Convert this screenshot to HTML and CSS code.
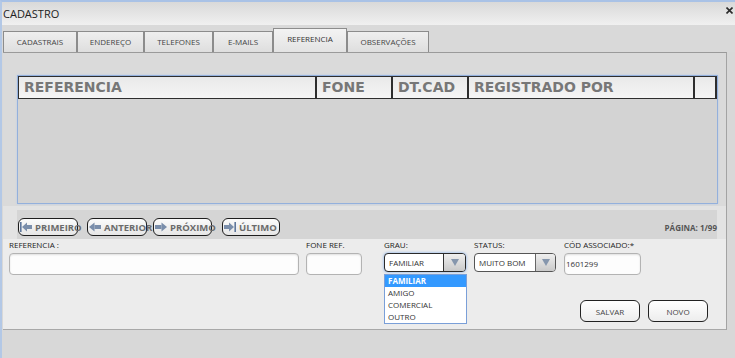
FILE: index.html
```html
<!DOCTYPE html>
<html lang="pt">
<head>
<meta charset="utf-8">
<title>Cadastro</title>
<link rel="stylesheet" href="styles.css">
</head>
<body>
<div class="win">
  <div class="titlebar">
    <span class="title">CADASTRO</span>
    <svg class="close" width="7" height="7" viewBox="0 0 7 7"><path d="M0.5 0.5 L6.5 6.5 M6.5 0.5 L0.5 6.5" stroke="#2a2a2a" stroke-width="1.6"/></svg>
  </div>
  <div class="tabs">
    <div class="tab w74">CADASTRAIS</div>
    <div class="tab w67">ENDEREÇO</div>
    <div class="tab w69">TELEFONES</div>
    <div class="tab w60">E-MAILS</div>
    <div class="tab w74 active">REFERENCIA</div>
    <div class="tab w82">OBSERVAÇÕES</div>
  </div>
  <div class="panel">
    <div class="top">
      <div class="grid">
        <div class="thead">
          <div class="th c1">REFERENCIA</div>
          <div class="th c2">FONE</div>
          <div class="th c3">DT.CAD</div>
          <div class="th c4">REGISTRADO POR</div>
          <div class="th c5"></div>
        </div>
      </div>
    </div>
    <div class="navrow">
      <div class="navstrip">
        <div class="nb b1"><svg width="12" height="10" viewBox="0 0 12 10"><rect x="0" y="0" width="1.6" height="10" fill="#5f779c"/><polygon points="2,5 7,0.5 7,9.5" fill="#7a8eab"/><rect x="7" y="3" width="5" height="4" fill="#7a8eab"/></svg><span>PRIMEIRO</span></div>
        <div class="nb b2"><svg width="12" height="10" viewBox="0 0 12 10"><polygon points="0,5 5.5,0.5 5.5,9.5" fill="#7a8eab"/><rect x="5.5" y="3" width="6.5" height="4" fill="#7a8eab"/></svg><span>ANTERIOR</span></div>
        <div class="nb b3"><svg width="12" height="10" viewBox="0 0 12 10"><rect x="0" y="3" width="6.5" height="4" fill="#7a8eab"/><polygon points="6.5,0.5 12,5 6.5,9.5" fill="#7a8eab"/></svg><span>PRÓXIMO</span></div>
        <div class="nb b4"><svg width="12" height="10" viewBox="0 0 12 10"><rect x="0" y="3" width="5" height="4" fill="#7a8eab"/><polygon points="5,0.5 10,5 5,9.5" fill="#7a8eab"/><rect x="10.4" y="0" width="1.6" height="10" fill="#5f779c"/></svg><span>ÚLTIMO</span></div>
        <div class="pagina">PÁGINA: 1/99</div>
      </div>
    </div>
    <div class="form">
      <div class="fields">
        <div class="field f-ref">
          <label class="lbl">REFERENCIA :</label>
          <div class="input"></div>
        </div>
        <div class="field f-fone">
          <label class="lbl">FONE REF.</label>
          <div class="input"></div>
        </div>
        <div class="field f-grau">
          <label class="lbl">GRAU:</label>
          <div class="select focus"><span class="sv">FAMILIAR</span><span class="arrow"><svg width="8" height="7" viewBox="0 0 8 7"><polygon points="0,0 8,0 4,7" fill="#8596ad"/></svg></span></div>
          <ul class="dropdown">
            <li class="sel">FAMILIAR</li>
            <li>AMIGO</li>
            <li>COMERCIAL</li>
            <li>OUTRO</li>
          </ul>
        </div>
        <div class="field f-status">
          <label class="lbl">STATUS:</label>
          <div class="select"><span class="sv">MUITO BOM</span><span class="arrow a2"><svg width="8" height="7" viewBox="0 0 8 7"><polygon points="0,0 8,0 4,7" fill="#8596ad"/></svg></span></div>
        </div>
        <div class="field f-cod">
          <label class="lbl">CÓD ASSOCIADO:*</label>
          <div class="input val">1601299</div>
        </div>
      </div>
      <div class="actions">
        <div class="btn">SALVAR</div>
        <div class="btn">NOVO</div>
      </div>
    </div>
  </div>
</div>
</body>
</html>
```
FILE: styles.css
```css
* { box-sizing: border-box; }
html, body { margin: 0; padding: 0; }
body {
  width: 735px;
  height: 358px;
  overflow: hidden;
  background: #d8d8d8;
  font-family: "Open Sans", "Liberation Sans", sans-serif;
  color: #333;
}
.win {
  height: 358px;
  border-top: 2px solid #a9c2e6;
  border-left: 2px solid #b3c8e6;
  display: flex;
  flex-direction: column;
}
.titlebar {
  height: 23px;
  flex: none;
  background: linear-gradient(#d9d9d9, #f0f0f0);
  display: flex;
  justify-content: space-between;
  align-items: center;
  padding: 0 2px 0 1px;
}
.title { font-size: 11px; color: #222; line-height: 1; }
.close { align-self: flex-start; margin-top: 5px; }

.tabs {
  height: 27px;
  flex: none;
  display: flex;
  align-items: flex-end;
  padding-left: 1px;
  background: #d9d9d9;
}
.tab {
  height: 21px;
  border: 1px solid #8c8c8c;
  border-bottom: none;
  background: linear-gradient(#efefef, #dedede);
  font-size: 8px;
  color: #444;
  display: flex;
  align-items: center;
  justify-content: center;
  line-height: 1;
}
.tab.active {
  height: 24px;
  background: linear-gradient(#f3f3f3, #e3e3e3);
  align-items: flex-start;
  padding-top: 6px;
  color: #333;
}
.w74 { width: 74px; }
.w67 { width: 67px; }
.w69 { width: 69px; }
.w60 { width: 60px; }
.w82 { width: 82px; }

.panel {
  width: 724px;
  margin-left: 1px;
  border-top: 1px solid #9a9a9a;
  border-right: 1px solid #a3a3a3;
  display: flex;
  flex-direction: column;
}
.top {
  background: #dadada;
  padding: 22px 0 2px 14px;
}
.grid {
  width: 701px;
  height: 129px;
  border: 1px solid #93b0dc;
  box-shadow: 0 0 2px #b7cbea;
  background: #d3d3d3;
}
.thead {
  display: flex;
  height: 23px;
  border: 1px solid #2e2e2e;
  border-right-width: 2px;
  background: linear-gradient(#e9e9e9, #f5f5f5);
}
.th {
  height: 100%;
  border-right: 2px solid #2e2e2e;
  font-family: "DejaVu Sans", Verdana, sans-serif;
  font-weight: bold;
  font-size: 14px;
  color: #777;
  line-height: 21px;
  padding-left: 5px;
  white-space: nowrap;
}
.c1 { width: 298px; }
.c2 { width: 76px; }
.c3 { width: 76px; }
.c4 { width: 226px; }
.c5 { flex: 1; border-right: none; }

.navrow {
  height: 33px;
  background: #e3e3e3;
  padding: 4px 9px 0 14px;
}
.navstrip {
  height: 29px;
  background: #d5d5d5;
  display: flex;
  align-items: center;
  padding: 5px 0 0 1px;
}
.nb {
  height: 18px;
  border: 1px solid #1e1e1e;
  border-radius: 6px;
  background: linear-gradient(#fbfbfb, #e6e6e6);
  display: flex;
  align-items: center;
  padding-left: 0;
  white-space: nowrap;
  font-weight: bold;
  font-size: 9.5px;
  color: #6b6b6b;
}
.nb svg { flex: none; margin-left: 1px; margin-right: 3px; }
.b1 { width: 60px; }
.b2 { width: 60px; margin-left: 9px; }
.b3 { width: 59px; margin-left: 6px; }
.b4 { width: 58px; margin-left: 10px; }
.pagina {
  margin-left: auto;
  font-weight: bold;
  font-size: 8px;
  color: #555;
}

.form {
  height: 91px;
  background: #ececec;
  border-bottom: 1px solid #a8a8a8;
  padding-left: 6px;
}
.fields { display: flex; }
.field { display: flex; flex-direction: column; position: relative; }
.f-ref { width: 290px; }
.f-fone { width: 56px; margin-left: 7px; }
.f-grau { width: 82px; margin-left: 22px; }
.f-status { width: 82px; margin-left: 8px; }
.f-cod { width: 77px; margin-left: 8px; }
.lbl {
  font-size: 8px;
  line-height: 12px;
  color: #222;
  white-space: nowrap;
}
.input {
  margin-top: 2px;
  height: 22px;
  border: 1px solid #b3b3b3;
  border-radius: 4px;
  background: #fdfdfd;
  box-shadow: inset 0 1px 2px rgba(0,0,0,0.12);
}
.input.val {
  font-size: 8px;
  color: #333;
  line-height: 20px;
  padding-left: 1px;
}
.select {
  margin-top: 2px;
  height: 19px;
  border: 1px solid #555;
  border-radius: 4px;
  background: #fff;
  display: flex;
  align-items: stretch;
  overflow: hidden;
}
.select.focus {
  border-color: #2a2a2a;
  box-shadow: 0 0 3px #78a6ea;
}
.sv {
  flex: 1;
  font-size: 8px;
  line-height: 17px;
  padding-left: 4px;
  color: #333;
}
.arrow {
  width: 22px;
  border-left: 1px solid #333;
  background: linear-gradient(#efefef, #c9c9c9);
  display: flex;
  align-items: center;
  justify-content: center;
}
.arrow.a2 { width: 20px; border-left-color: #666; }
.dropdown {
  position: absolute;
  top: 35px;
  left: 0;
  width: 83px;
  margin: 0;
  padding: 0;
  list-style: none;
  background: #fff;
  border: 1px solid #7a9fd8;
}
.dropdown li {
  height: 12px;
  line-height: 12px;
  font-size: 8px;
  padding-left: 3px;
  color: #333;
}
.dropdown li.sel {
  background: #3399ff;
  color: #fff;
  font-weight: bold;
}
.actions {
  display: flex;
  justify-content: flex-end;
  gap: 8px;
  margin-top: 25px;
  padding-right: 18px;
}
.btn {
  width: 60px;
  height: 22px;
  border: 1px solid #222;
  border-radius: 6px;
  background: linear-gradient(#ffffff, #ededed);
  font-size: 8px;
  color: #444;
  display: flex;
  align-items: center;
  justify-content: center;
}
```
